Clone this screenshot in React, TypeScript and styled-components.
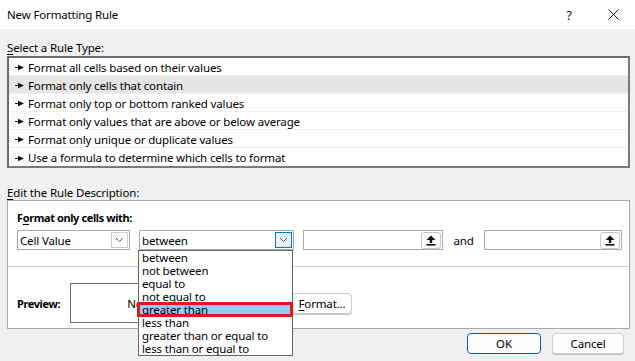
import React from "react";
import styled, { createGlobalStyle } from "styled-components";

const Global = createGlobalStyle`
  html, body { margin: 0; padding: 0; background: #ffffff; }
  body {
    font-family: "Noto Sans", "Open Sans", sans-serif;
    font-size: 11.5px;
    letter-spacing: -0.15px;
    color: #000;
  }
  * { box-sizing: border-box; }
`;

const Window = styled.div`
  width: 635px;
  height: 361px;
  background: #f0f0f0;
  position: relative;
  overflow: hidden;
  display: flex;
  flex-direction: column;
`;

const TitleBar = styled.div`
  height: 29px;
  flex-shrink: 0;
  background: #ffffff;
  display: flex;
  align-items: center;
  padding-left: 7px;
`;

const Title = styled.div`
  flex: 1;
  line-height: 16px;
`;

const TitleButton = styled.div`
  width: 44px;
  height: 29px;
  display: flex;
  align-items: center;
  justify-content: center;
  font-size: 13px;
  color: #1a1a1a;
`;

const Body = styled.div`
  flex: 1;
  display: flex;
  flex-direction: column;
  padding: 0 5px 0 7px;
`;

const SectionLabel = styled.div<{ $top: number }>`
  margin-top: ${(p) => p.$top}px;
  height: 16px;
  line-height: 16px;
  padding-top: 1px;
  u { text-decoration: underline; text-underline-offset: 2px; }
`;

const RuleList = styled.div`
  margin-top: 1px;
  background: #ffffff;
  border: 2px solid #7a7a7a;
  border-top-color: #6a6a6a;
  border-left-color: #6a6a6a;
  display: flex;
  flex-direction: column;
`;

const RuleRow = styled.div<{ $selected?: boolean }>`
  height: 18px;
  display: flex;
  align-items: center;
  padding: 2px 0 0 6px;
  gap: 4px;
  border-bottom: 1px solid #f0f0f0;
  background: ${(p) => (p.$selected ? "#e5e5e5" : "#ffffff")};
  line-height: 14px;
  &:last-child { border-bottom: none; }
`;

const Panel = styled.div`
  background: #ffffff;
  border: 1px solid #a8a8a8;
  display: flex;
  flex-direction: column;
  position: relative;
`;

const PanelTop = styled.div`
  padding: 9px 0 16px 9px;
  border-bottom: 1px solid #cfcfcf;
`;

const BoldLabel = styled.div`
  font-size: 11px;
  font-weight: 700;
  letter-spacing: -0.4px;
  height: 16px;
  line-height: 16px;
  u { text-decoration: underline; text-underline-offset: 2px; }
`;

const ControlRow = styled.div`
  margin-top: 4px;
  display: flex;
  align-items: center;
`;

const Combo = styled.div<{ $w: number; $gap: number }>`
  width: ${(p) => p.$w}px;
  margin-right: ${(p) => p.$gap}px;
  height: 20px;
  border: 1px solid #a9a9a9;
  background: #fff;
  display: flex;
  align-items: center;
  padding: 0 1px 0 2px;
`;

const ComboText = styled.div`
  flex: 1;
  line-height: 16px;
  padding-top: 1px;
`;

const ComboButton = styled.div<{ $active?: boolean }>`
  width: 17px;
  height: 16px;
  border: 1px solid ${(p) => (p.$active ? "#0078d7" : "#cccccc")};
  background: ${(p) => (p.$active ? "#e5f1fb" : "#ffffff")};
  display: flex;
  align-items: center;
  justify-content: center;
`;

const RefBox = styled.div<{ $w: number }>`
  width: ${(p) => p.$w}px;
  height: 20px;
  border: 1px solid #a9a9a9;
  background: #fff;
  display: flex;
  justify-content: flex-end;
  align-items: center;
  padding-right: 1px;
`;

const RefButton = styled.div`
  width: 20px;
  height: 17px;
  border: 1px solid #c6c6c6;
  border-radius: 3px;
  background: #fdfdfd;
  display: flex;
  align-items: center;
  justify-content: center;
`;

const AndText = styled.div`
  width: 41px;
  text-align: center;
  line-height: 16px;
  padding-top: 1px;
`;

const PanelBottom = styled.div`
  padding: 16px 0 5px 9px;
  display: flex;
  align-items: center;
`;

const PreviewLabel = styled.div`
  width: 53px;
  font-size: 11px;
  font-weight: 700;
  letter-spacing: -0.4px;
  line-height: 16px;
  padding-top: 1px;
`;

const PreviewBox = styled.div`
  width: 190px;
  height: 40px;
  border: 1px solid #6e6e6e;
  display: flex;
  align-items: center;
  justify-content: center;
  margin-right: 32px;
  line-height: 16px;
  padding-top: 1px;
`;

const PushButton = styled.div<{ $w: number; $primary?: boolean }>`
  width: ${(p) => p.$w}px;
  height: 21px;
  border-radius: 4px;
  border: 1px solid ${(p) => (p.$primary ? "#005fb8" : "#cfcfcf")};
  background: #fdfdfd;
  display: flex;
  align-items: center;
  justify-content: center;
  line-height: 16px;
  padding-top: 1px;
  box-shadow: ${(p) => (p.$primary ? "none" : "0 1px 0 #c2c2c2")};
  u { text-decoration: underline; text-underline-offset: 2px; }
`;

const Footer = styled.div`
  margin-top: 4px;
  display: flex;
  justify-content: flex-end;
  gap: 11px;
  padding-right: 6px;
`;

const DropList = styled.div`
  position: absolute;
  left: 138px;
  top: 250px;
  width: 155px;
  border: 1px solid #646464;
  background: #ffffff;
  display: flex;
  flex-direction: column;
  z-index: 5;
`;

const DropItem = styled.div<{ $hl?: boolean }>`
  height: 13px;
  line-height: 13px;
  padding-left: 3px;
  white-space: nowrap;
  position: relative;
  background: ${(p) => (p.$hl ? "#9dc9ee" : "transparent")};
  &::after {
    content: "";
    display: ${(p) => (p.$hl ? "block" : "none")};
    position: absolute;
    left: -2px;
    right: -1px;
    top: -1px;
    bottom: -1px;
    border: 3px solid #e8121e;
  }
`;

const Bullet = () => (
  <svg width="9" height="7" viewBox="0 0 9 7">
    <rect x="0" y="3" width="5" height="1" fill="#111" />
    <polygon points="3,0.8 9,3.5 3,6.2" fill="#111" />
  </svg>
);

const Chevron = () => (
  <svg width="9" height="6" viewBox="0 0 9 6">
    <polyline points="1,1 4.5,4.5 8,1" fill="none" stroke="#555" strokeWidth="1" />
  </svg>
);

const UpArrow = () => (
  <svg width="10" height="11" viewBox="0 0 10 11">
    <polygon points="5,0.5 9.5,5 6.2,5 6.2,8 3.8,8 3.8,5 0.5,5" fill="#111" />
    <rect x="0.5" y="9" width="9" height="1.6" fill="#111" />
  </svg>
);

const CloseIcon = () => (
  <svg width="11" height="11" viewBox="0 0 11 11">
    <path d="M0.5 0.5 L10.5 10.5 M10.5 0.5 L0.5 10.5" stroke="#1a1a1a" strokeWidth="1" />
  </svg>
);

const rules = [
  "Format all cells based on their values",
  "Format only cells that contain",
  "Format only top or bottom ranked values",
  "Format only values that are above or below average",
  "Format only unique or duplicate values",
  "Use a formula to determine which cells to format",
];

const operators = [
  "between",
  "not between",
  "equal to",
  "not equal to",
  "greater than",
  "less than",
  "greater than or equal to",
  "less than or equal to",
];

export default function App() {
  return (
    <>
      <Global />
      <Window>
        <TitleBar>
          <Title>New Formatting Rule</Title>
          <TitleButton>?</TitleButton>
          <TitleButton>
            <CloseIcon />
          </TitleButton>
        </TitleBar>
        <Body>
          <SectionLabel $top={10}>
            <u>S</u>elect a Rule Type:
          </SectionLabel>
          <RuleList>
            {rules.map((r, i) => (
              <RuleRow key={r} $selected={i === 1}>
                <Bullet />
                <span>{r}</span>
              </RuleRow>
            ))}
          </RuleList>
          <SectionLabel $top={16}>
            <u>E</u>dit the Rule Description:
          </SectionLabel>
          <Panel>
            <PanelTop>
              <BoldLabel>
                F<u>o</u>rmat only cells with:
              </BoldLabel>
              <ControlRow>
                <Combo $w={113} $gap={9}>
                  <ComboText>Cell Value</ComboText>
                  <ComboButton>
                    <Chevron />
                  </ComboButton>
                </Combo>
                <Combo $w={155} $gap={9}>
                  <ComboText>between</ComboText>
                  <ComboButton $active>
                    <Chevron />
                  </ComboButton>
                </Combo>
                <RefBox $w={140}>
                  <RefButton>
                    <UpArrow />
                  </RefButton>
                </RefBox>
                <AndText>and</AndText>
                <RefBox $w={138}>
                  <RefButton>
                    <UpArrow />
                  </RefButton>
                </RefBox>
              </ControlRow>
            </PanelTop>
            <PanelBottom>
              <PreviewLabel>Preview:</PreviewLabel>
              <PreviewBox>No Format Set</PreviewBox>
              <PushButton $w={60}>
                <u>F</u>ormat...
              </PushButton>
            </PanelBottom>
          </Panel>
          <Footer>
            <PushButton $w={74} $primary>
              OK
            </PushButton>
            <PushButton $w={72}>Cancel</PushButton>
          </Footer>
        </Body>
        <DropList>
          {operators.map((o, i) => (
            <DropItem key={o} $hl={i === 4}>
              {o}
            </DropItem>
          ))}
        </DropList>
      </Window>
    </>
  );
}
